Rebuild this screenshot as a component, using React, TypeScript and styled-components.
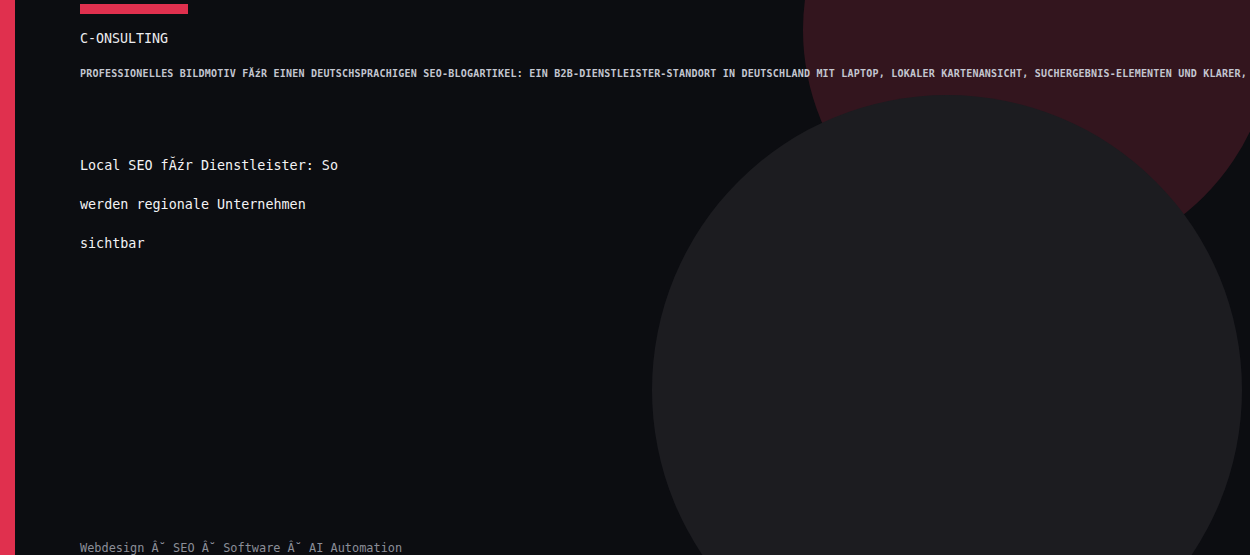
import styled, { createGlobalStyle } from 'styled-components'

const GlobalStyle = createGlobalStyle`
    html, body {
        margin: 0;
        padding: 0;
        background: #0c0d11;
    }
    body {
        overflow: hidden;
    }
`

const Page = styled.div`
    position: relative;
    display: flex;
    width: 1250px;
    height: 555px;
    overflow: hidden;
    background: #0c0d11;
    font-family: 'DejaVu Sans Mono', 'Liberation Mono', monospace;
`

const SideBar = styled.div`
    flex: 0 0 15px;
    background: #e0304e;
`

const Circle = styled.div<{ $size: number; $color: string }>`
    position: absolute;
    width: ${p => p.$size}px;
    height: ${p => p.$size}px;
    border-radius: 50%;
    background: ${p => p.$color};
`

const RedCircle = styled(Circle)`
    left: 803px;
    top: -205px;
`

const GreyCircle = styled(Circle)`
    left: 652px;
    top: 95px;
`

const Content = styled.main`
    position: relative;
    z-index: 1;
    flex: 1;
    display: flex;
    flex-direction: column;
    padding: 4px 0 0 65px;
    min-width: 0;
`

const Accent = styled.div`
    width: 108px;
    height: 10px;
    background: #e0304e;
`

const Brand = styled.div`
    margin-top: 15px;
    color: #ececef;
    font-size: 13.3px;
    line-height: 20px;
`

const Caption = styled.div`
    margin-top: 17px;
    color: #c3c6d0;
    font-size: 10px;
    letter-spacing: 0.22px;
    line-height: 16px;
    white-space: nowrap;
    font-weight: bold;
`

const Title = styled.h1`
    margin: 64px 0 0;
    width: 290px;
    color: #f3f3f5;
    font-size: 13.4px;
    font-weight: normal;
    line-height: 39px;
`

const Footer = styled.div`
    margin-top: auto;
    color: #8b8e98;
    font-size: 11.9px;
    line-height: 13px;
`

export default function App() {
    return (
        <>
            <GlobalStyle />
            <Page>
                <RedCircle $size={470} $color="#33151e" />
                <GreyCircle $size={590} $color="#1c1c20" />
                <SideBar />
                <Content>
                    <Accent />
                    <Brand>C-ONSULTING</Brand>
                    <Caption>
                        PROFESSIONELLES BILDMOTIV FĂźR EINEN DEUTSCHSPRACHIGEN SEO-BLOGARTIKEL: EIN B2B-DIENSTLEISTER-STANDORT IN DEUTSCHLAND MIT LAPTOP, LOKALER KARTENANSICHT, SUCHERGEBNIS-ELEMENTEN UND KLARER,
                    </Caption>
                    <Title>
                        Local SEO fĂźr Dienstleister: So werden regionale Unternehmen sichtbar
                    </Title>
                    <Footer>Webdesign Â˘ SEO Â˘ Software Â˘ AI Automation</Footer>
                </Content>
            </Page>
        </>
    )
}
